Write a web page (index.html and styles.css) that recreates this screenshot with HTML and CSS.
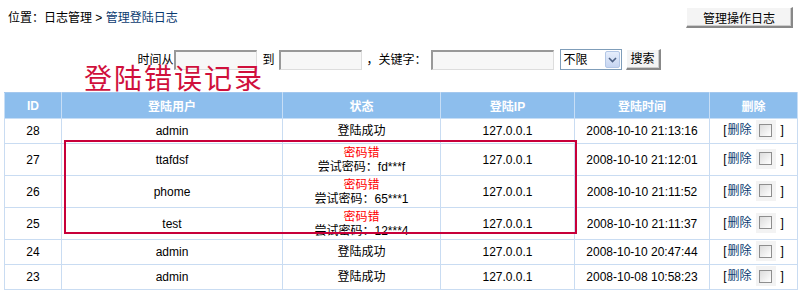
FILE: index.html
```html
<!DOCTYPE html>
<html>
<head>
<meta charset="utf-8">
<link rel="stylesheet" href="styles.css">
</head>
<body>
<div class="page">
  <div class="topbar">
    <div class="loc">位置：日志管理 &gt; <span class="cur">管理登陆日志</span></div>
    <div class="btn btn-top">管理操作日志</div>
  </div>
  <div class="search">
    <span class="lbl">时间从</span>
    <span class="inp w82"></span>
    <span class="lbl">到</span>
    <span class="inp w82"></span>
    <span class="lbl">，关键字：</span>
    <span class="inp w122"></span>
    <span class="sel"><span class="sel-txt">不限</span><span class="sel-arrow"><svg width="9" height="6" viewBox="0 0 9 6"><path d="M1 1 L4.5 4.5 L8 1" fill="none" stroke="#4d6185" stroke-width="1.6"/></svg></span></span>
    <span class="btn btn-search">搜索</span>
  </div>
  <div class="tablewrap">
    <table class="log">
      <colgroup>
        <col class="c-id"><col class="c-user"><col class="c-st"><col class="c-ip"><col class="c-time"><col class="c-del">
      </colgroup>
      <thead>
        <tr><th>ID</th><th>登陆用户</th><th>状态</th><th>登陆IP</th><th>登陆时间</th><th>删除</th></tr>
      </thead>
      <tbody>
        <tr class="r1"><td>28</td><td>admin</td><td>登陆成功</td><td>127.0.0.1</td><td>2008-10-10 21:13:16</td><td class="del">[<a>删除</a><span class="chk"><i></i></span>]</td></tr>
        <tr class="r2"><td>27</td><td>ttafdsf</td><td><span class="err">密码错</span><br>尝试密码：fd***f</td><td>127.0.0.1</td><td>2008-10-10 21:12:01</td><td class="del">[<a>删除</a><span class="chk"><i></i></span>]</td></tr>
        <tr class="r2"><td>26</td><td>phome</td><td><span class="err">密码错</span><br>尝试密码：65***1</td><td>127.0.0.1</td><td>2008-10-10 21:11:52</td><td class="del">[<a>删除</a><span class="chk"><i></i></span>]</td></tr>
        <tr class="r2"><td>25</td><td>test</td><td><span class="err">密码错</span><br>尝试密码：12***4</td><td>127.0.0.1</td><td>2008-10-10 21:11:37</td><td class="del">[<a>删除</a><span class="chk"><i></i></span>]</td></tr>
        <tr class="r1"><td>24</td><td>admin</td><td>登陆成功</td><td>127.0.0.1</td><td>2008-10-10 20:47:44</td><td class="del">[<a>删除</a><span class="chk"><i></i></span>]</td></tr>
        <tr class="r1"><td>23</td><td>admin</td><td>登陆成功</td><td>127.0.0.1</td><td>2008-10-08 10:58:23</td><td class="del">[<a>删除</a><span class="chk"><i></i></span>]</td></tr>
      </tbody>
    </table>
  </div>
  <div class="annot-title">登陆错误记录</div>
  <div class="annot-box"></div>
</div>
</body>
</html>
```
FILE: styles.css
```css
html, body {
  margin: 0;
  padding: 0;
  background: #fff;
}
body {
  font-family: "Liberation Sans", "Noto Sans CJK SC", sans-serif;
  font-size: 12px;
  color: #000;
}
.page {
  position: relative;
  width: 806px;
  height: 290px;
  overflow: hidden;
}
.topbar {
  display: flex;
  justify-content: space-between;
  align-items: center;
  height: 35px;
  padding: 0 13px 0 8px;
  box-sizing: border-box;
}
.loc {
  line-height: 14px;
}
.cur {
  color: #0b3b70;
}
.btn {
  display: inline-flex;
  align-items: center;
  justify-content: center;
  box-sizing: border-box;
  background: #f4f4f4;
  border-top: 1px solid #fff;
  border-left: 1px solid #fff;
  border-right: 2px solid #888;
  border-bottom: 2px solid #888;
  box-shadow: inset -1px -1px 0 #ccc;
}
.btn-top {
  width: 107px;
  height: 21px;
  font-size: 12px;
}
.search {
  display: flex;
  align-items: center;
  justify-content: center;
  height: 21px;
  margin-top: 14px;
  padding-right: 8px;
}
.lbl {
  margin: 0 4px 0 5px;
  line-height: 12px;
}
.search .lbl:first-child {
  margin-left: 0;
  margin-right: 1px;
}
.inp {
  display: inline-block;
  height: 20px;
  box-sizing: border-box;
  background: #f7f7f7;
  border-top: 2px solid #999;
  border-left: 2px solid #999;
  border-right: 1px solid #ddd;
  border-bottom: 1px solid #ddd;
}
.w82 { width: 83px; }
.w122 { width: 123px; }
.sel {
  display: inline-flex;
  align-items: center;
  box-sizing: border-box;
  width: 62px;
  height: 21px;
  margin-left: 6px;
  border: 1px solid #7f9db9;
  background: #fff;
  padding: 1px;
  line-height: 14px;
}
.sel-txt {
  flex: 1;
  padding-left: 2px;
}
.sel-arrow {
  display: inline-flex;
  align-items: center;
  justify-content: center;
  width: 15px;
  height: 17px;
  box-sizing: border-box;
  border: 1px solid #b3c7e6;
  background: linear-gradient(#e6eefc, #c6d5f1);
  border-radius: 2px;
}
.btn-search {
  width: 35px;
  height: 21px;
  margin-left: 4px;
  line-height: 14px;
}
.tablewrap {
  margin-top: 22px;
  padding: 0 9px 0 4px;
}
.log {
  width: 793px;
  border-collapse: collapse;
  table-layout: fixed;
  border: 1px solid #a4c8ee;
}
.c-id { width: 57px; }
.c-user { width: 221px; }
.c-st { width: 158px; }
.c-ip { width: 134px; }
.c-time { width: 135px; }
.c-del { width: 88px; }
.log th {
  background: #8dbeed;
  color: #fff;
  font-weight: bold;
  height: 25px;
  padding: 0;
  border: 1px solid #c7def6;
  border-top-color: #a4c8ee;
}
.log td {
  text-align: center;
  padding: 0;
  border: 1px solid #c9dcf2;
  line-height: 14px;
}
.log tr.r1 td { height: 24px; }
.log tr.r2 td { height: 30px; }
.log tr.r2 td:nth-child(3) { padding-top: 1px; }
.err { color: #f00; }
.del a {
  color: #0b3b70;
  margin-left: 1px;
}
.chk {
  display: inline-flex;
  align-items: center;
  justify-content: center;
  width: 20px;
  height: 20px;
  background: #f3f3f3;
  vertical-align: middle;
  margin: 0 5px 0 4px;
  position: relative;
  top: -1px;
}
.chk i {
  display: block;
  width: 11px;
  height: 11px;
  border: 1px solid #8e8e8e;
  background: linear-gradient(135deg, #dcdcdc, #fff);
}
.annot-title {
  position: absolute;
  left: 84px;
  top: 66px;
  font-family: "Noto Sans CJK SC", sans-serif;
  font-size: 28px;
  line-height: 23px;
  letter-spacing: 2px;
  color: #d0103c;
}
.annot-box {
  position: absolute;
  left: 64px;
  top: 140px;
  width: 509px;
  height: 90px;
  border: 2px solid #c8003a;
}
```
